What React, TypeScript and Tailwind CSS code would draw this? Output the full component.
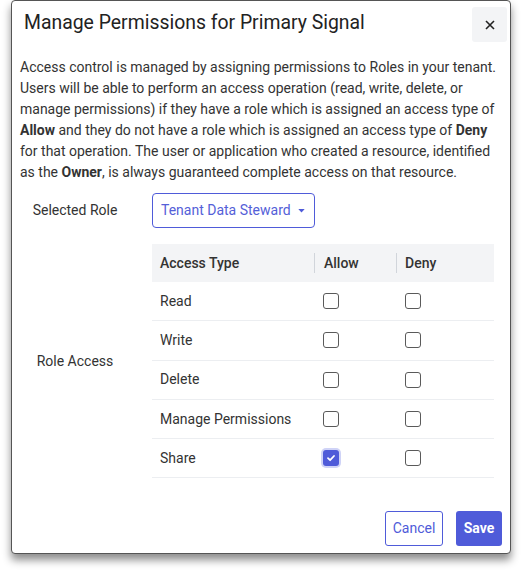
import React from "react";

const INDIGO = "#4f5bd9";

function Box({ checked }: { checked?: boolean }) {
  if (checked) {
    return (
      <div className="w-[20px] h-[20px] -m-[2px] rounded-[5px] bg-[#cfd3f7] flex items-center justify-center">
        <div className="w-[16px] h-[16px] rounded-[3px] bg-[#4f5bd9] flex items-center justify-center">
          <svg width="10" height="10" viewBox="0 0 10 10">
            <path d="M2 5.2 L4.1 7.2 L8 3" stroke="white" strokeWidth="1.8" fill="none" strokeLinecap="round" strokeLinejoin="round" />
          </svg>
        </div>
      </div>
    );
  }
  return <div className="w-[16px] h-[16px] rounded-[3px] border-[1.5px] border-[#5a5a5a] bg-white" />;
}

const rows = [
  { name: "Read", allow: false, deny: false },
  { name: "Write", allow: false, deny: false },
  { name: "Delete", allow: false, deny: false },
  { name: "Manage Permissions", allow: false, deny: false },
  { name: "Share", allow: true, deny: false },
];

export default function App() {
  return (
    <div className="w-[522px] h-[577px] bg-white font-['Roboto',sans-serif] text-[#333]">
      <div className="ml-[11px] w-[500px] h-[554px] border border-[#555] rounded-[4px] bg-white shadow-[0_6px_8px_rgba(0,0,0,0.45)] flex flex-col">
        <div className="flex items-start justify-between pl-[12px] pr-[3px] pt-[6px]">
          <div className="text-[19.4px] leading-[24px] text-[#222] mt-[4px]">Manage Permissions for Primary Signal</div>
          <button className="w-[35px] h-[35px] rounded-[3px] bg-[#f3f4f6] flex items-center justify-center">
            <svg width="10" height="10" viewBox="0 0 10 10">
              <path d="M1 1 L9 9 M9 1 L1 9" stroke="#222" strokeWidth="1.6" />
            </svg>
          </button>
        </div>
        <div className="px-[8px]">
          <p className="mt-[15px] text-[14px] leading-[21px] text-[#333]">
            Access control is managed by assigning permissions to Roles in your tenant. Users will be able to perform an access operation (read, write, delete, or manage permissions) if they have a role which is assigned an access type of <b className="font-bold">Allow</b> and they do not have a role which is assigned an access type of <b className="font-bold">Deny</b> for that operation. The user or application who created a resource, identified as the <b className="font-bold">Owner</b>, is always guaranteed complete access on that resource.
          </p>
          <div className="flex items-center mt-[10px]">
            <div className="w-[110px] text-center text-[14px]">Selected Role</div>
            <div className="ml-[22px] w-[163px] h-[35px] border border-[#4f5bd9] rounded-[4px] flex items-center pl-[8px] text-[14px] text-[#5460d8]">
              <span>Tenant Data Steward</span>
              <svg className="ml-[7px]" width="7" height="4" viewBox="0 0 8 5">
                <path d="M0 0 L8 0 L4 4.5 Z" fill={INDIGO} />
              </svg>
            </div>
          </div>
          <div className="flex items-center mt-[16px]">
            <div className="w-[110px] text-center text-[14px]">Role Access</div>
            <div className="ml-[22px] w-[342px] text-[14px]">
              <div className="flex h-[38px] bg-[#f3f4f6] items-center font-medium text-[#333]">
                <div className="w-[162px] pl-[8px]">Access Type</div>
                <div className="w-[82px] border-l border-[#d1d5db] h-[20px] flex items-center pl-[9px]">Allow</div>
                <div className="flex-1 border-l border-[#d1d5db] h-[20px] flex items-center pl-[8px]">Deny</div>
              </div>
              {rows.map((r) => (
                <div key={r.name} className="flex h-[39.3px] items-center border-b border-[#eceef1]">
                  <div className="w-[162px] pl-[8px]">{r.name}</div>
                  <div className="w-[82px] pl-[9px]"><Box checked={r.allow} /></div>
                  <div className="flex-1 pl-[9px]"><Box checked={r.deny} /></div>
                </div>
              ))}
            </div>
          </div>
        </div>
        <div className="flex justify-end gap-[13px] pr-[8px] mt-auto pb-[7px]">
          <button className="w-[58px] h-[35px] border border-[#4f5bd9] rounded-[3px] text-[14px] text-[#4f5bd9] bg-white">Cancel</button>
          <button className="w-[46px] h-[35px] rounded-[3px] text-[14px] font-bold text-white bg-[#4f5bd9]">Save</button>
        </div>
      </div>
    </div>
  );
}
